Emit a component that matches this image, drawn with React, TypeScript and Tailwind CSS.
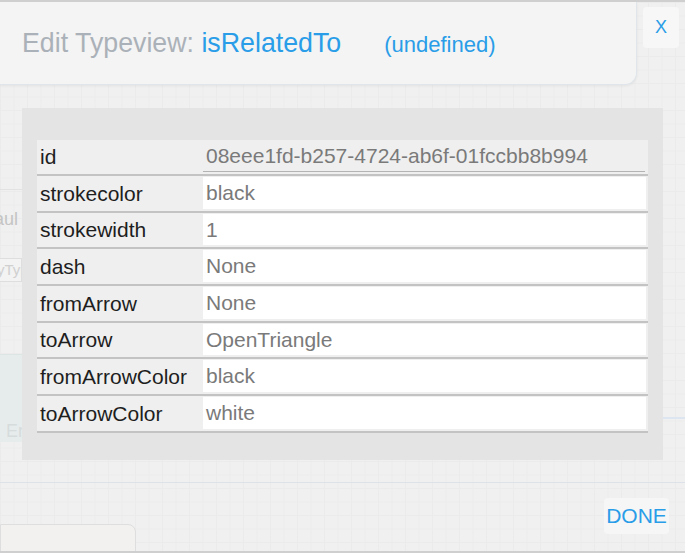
import React from "react";

const rows: { label: string; value: string }[] = [
  { label: "strokecolor", value: "black" },
  { label: "strokewidth", value: "1" },
  { label: "dash", value: "None" },
  { label: "fromArrow", value: "None" },
  { label: "toArrow", value: "OpenTriangle" },
  { label: "fromArrowColor", value: "black" },
  { label: "toArrowColor", value: "white" },
];

export default function App() {
  return (
    <div className="relative w-[685px] h-[553px] overflow-hidden bg-[#f0f0f0] bg-[linear-gradient(#ebebeb_1px,transparent_1px),linear-gradient(90deg,#ebebeb_1px,transparent_1px)] bg-[size:13.5px_13.5px] font-['Liberation_Sans',Arial,sans-serif] border-t-2 border-b-2 border-[#cfcfcf]">
      {/* background hints peeking out on the left */}
      <div className="absolute left-0 top-[187px] w-[22px] h-px bg-[#e2e2e2]" />
      <div className="absolute left-0 top-[204px] w-[22px] overflow-hidden text-[18px] text-[#c4c4c4] whitespace-nowrap">
        <span className="ml-[-6px]">aul</span>
      </div>
      <div className="absolute left-0 top-[256px] w-[22px] h-[24px] border-y border-r border-[#dedede] bg-[#f3f3f3] overflow-hidden text-[15px] leading-[22px] text-[#d0d0d0] whitespace-nowrap">
        <span className="ml-[-3px]">yTyp</span>
      </div>
      <div className="absolute left-0 top-[352px] w-[22px] h-[88px] bg-[#e6ecec] border-t border-[#dde4e4]" />
      <div className="absolute left-[6px] top-[416px] text-[18px] text-[#d6dcdc]">Er</div>
      <div className="absolute left-[663px] top-[415px] w-[22px] h-[2px] bg-[#dde6f0]" />
      <div className="absolute left-0 top-[522px] w-[136px] h-[40px] bg-[#f2f1f0] border border-[#dedede] rounded-tr-[8px]" />

      <div className="relative flex items-start">
        <div className="w-[637px] h-[83px] flex items-center pl-[22px] bg-[#f4f4f4] border-b border-r border-[#dfe5ea] rounded-br-[12px] shadow-[0_1px_3px_rgba(0,0,0,0.06)]">
          <span className="text-[26.75px] text-[#abb1b8] whitespace-pre">Edit Typeview: </span>
          <span className="text-[26.75px] text-[#2a9de8]">isRelatedTo</span>
          <span className="ml-[43px] mt-[2px] text-[22px] text-[#2a9de8]">(undefined)</span>
        </div>
        <div className="ml-[6px] mt-[5px] w-[36px] h-[41px] flex items-center justify-center rounded-[4px] bg-[#f7f7f7] text-[18px] text-[#2a9de8]">
          X
        </div>
      </div>

      <div className="relative mt-[23px] ml-[22px] w-[641px] h-[352px] bg-[#e4e4e4] pt-[32px] pl-[15px]">
        <div className="w-[611px] flex flex-col">
          <div className="flex h-[36px] bg-[#efefef] border-b-2 border-[#c3c3c3]">
            <div className="w-[166px] pl-[3px] flex items-center text-[21px] text-[#1e1e1e]">id</div>
            <div className="flex-1 pr-[3px] flex">
              <div className="flex-1 flex items-center pl-[3px] text-[21px] text-[#7a7a7a] border-b border-[#b4b4b4] mb-[2px]">
                08eee1fd-b257-4724-ab6f-01fccbb8b994
              </div>
            </div>
          </div>
          {rows.map((r, i) => (
            <div
              key={r.label}
              className={`flex bg-[#efefef] border-b-2 border-[#c3c3c3] ${i % 3 === 2 ? "h-[37px]" : "h-[36.5px]"}`}
            >
              <div className="w-[166px] pl-[3px] flex items-center text-[21px] text-[#1e1e1e]">{r.label}</div>
              <div className="flex-1 pr-[2px] pt-[1px] pb-[2px] flex">
                <div className="flex-1 bg-white flex items-center pl-[3px] text-[21px] text-[#7a7a7a]">{r.value}</div>
              </div>
            </div>
          ))}
        </div>
      </div>

      <div className="relative mt-[22px] h-px bg-[#dce2e8]" />
      <div className="relative flex justify-end pr-[16px] mt-[15px]">
        <div className="w-[65px] h-[36px] flex items-center justify-center rounded-[4px] bg-[#f6f6f6] text-[21px] text-[#2a9de8]">
          DONE
        </div>
      </div>
    </div>
  );
}
